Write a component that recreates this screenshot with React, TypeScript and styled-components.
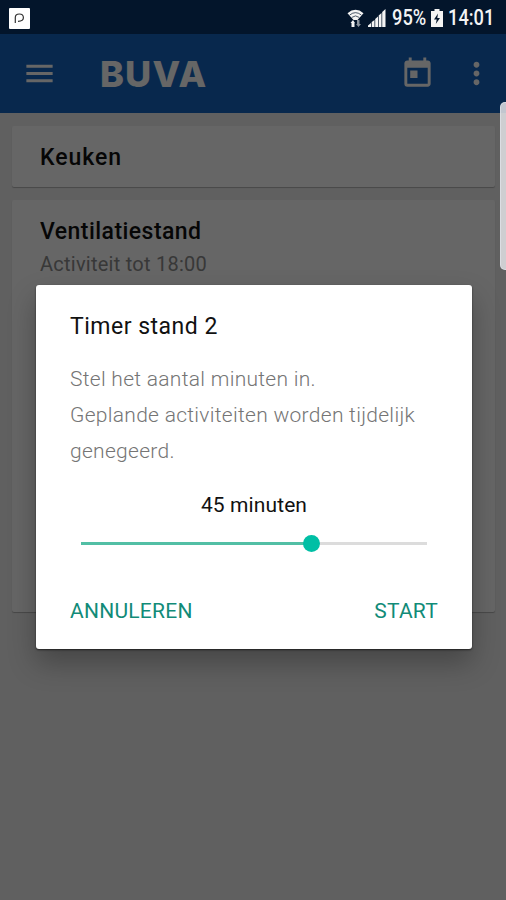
import React, { useState } from 'react'

import styled, { createGlobalStyle } from 'styled-components'
import { MdMenu, MdMoreVert, MdToday } from 'react-icons/md'

const GlobalStyle = createGlobalStyle`
  * {
    box-sizing: border-box;
  }

  body {
    margin: 0;
    overflow: hidden;
    font-family: Roboto, 'Liberation Sans', sans-serif;
  }
`

const Screen = styled.div`
  position: relative;
  display: flex;
  flex-direction: column;
  width: 506px;
  height: 900px;
  background: #f0f0f0;
  overflow: hidden;
`

const StatusBar = styled.div`
  position: relative;
  z-index: 2;
  display: flex;
  align-items: center;
  justify-content: space-between;
  flex: none;
  height: 34px;
  padding: 2px 11px 0 9px;
  background: #03152b;
  color: #f4f4f4;
`

const StatusIcons = styled.div`
  display: flex;
  align-items: center;

  svg {
    display: block;
  }
`

const StatusText = styled.span<{ $width: number }>`
  width: ${({ $width }) => $width}px;
  font-size: 22px;
  font-weight: 500;
  line-height: 32px;
  white-space: nowrap;
  transform: scaleX(0.83);
  transform-origin: left center;
`

const Toolbar = styled.header`
  display: flex;
  align-items: center;
  flex: none;
  height: 79px;
  padding: 0 12px 0 22px;
  background: #1565c0;
  color: #fff;
`

const Logo = styled.div`
  flex: 1;
  margin-left: 43px;
  font-family: Inter, 'Liberation Sans', sans-serif;
  font-size: 36px;
  font-weight: 800;
  line-height: 40px;
  letter-spacing: 1.2px;
`

const MoreButton = styled.div`
  display: flex;
  margin-left: 24px;
`

const Content = styled.main`
  display: flex;
  flex-direction: column;
  gap: 13px;
  padding: 13px 11px 0 12px;
`

const Card = styled.section<{ $height: number }>`
  height: ${({ $height }) => $height}px;
  padding: 18px 28px;
  border-radius: 2px;
  background: #fff;
  box-shadow: 0 1px 1px rgba(0, 0, 0, 0.25);
`

const CardTitle = styled.h2<{ $spacing: number }>`
  margin: 0;
  color: #111;
  font-size: 23px;
  font-weight: 500;
  line-height: 28px;
  letter-spacing: ${({ $spacing }) => $spacing}px;
`

const CardText = styled.p`
  margin: 4px 0 0;
  color: #8c8c8c;
  font-size: 20px;
  line-height: 28px;
  letter-spacing: 0.25px;
`

const Backdrop = styled.div`
  position: absolute;
  inset: 0;
  z-index: 1;
  display: flex;
  align-items: center;
  justify-content: center;
  padding: 34px 0 0 2px;
  background: rgba(0, 0, 0, 0.6);
`

const Dialog = styled.div`
  display: flex;
  flex-direction: column;
  width: 436px;
  height: 364px;
  padding: 28px 34px 24px;
  border-radius: 3px;
  background: #fff;
  box-shadow: 0 1px 2px rgba(0, 0, 0, 0.6), 0 14px 28px rgba(0, 0, 0, 0.28);
`

const DialogTitle = styled.h1`
  margin: 0;
  color: #111;
  font-size: 23px;
  font-weight: 400;
  line-height: 28px;
  letter-spacing: 0.5px;
`

const DialogText = styled.p`
  margin: 20px 0 0;
  color: #757575;
  font-size: 21px;
  font-weight: 300;
  line-height: 36px;
  letter-spacing: 0.29px;
  white-space: nowrap;
`

const Minutes = styled.div`
  margin-top: 22px;
  color: #111;
  font-size: 21px;
  line-height: 28px;
  letter-spacing: 0.1px;
  text-align: center;
`

const Slider = styled.div`
  display: flex;
  align-items: center;
  height: 18px;
  margin: 15px 11px 0;
`

const Track = styled.div<{ $active?: boolean }>`
  flex: ${({ $active }) => ($active ? 'none' : 1)};
  height: 3px;
  background: ${({ $active }) => ($active ? '#52bfa5' : '#dcdcdc')};
`

const Thumb = styled.div`
  position: relative;
  z-index: 1;
  flex: none;
  width: 17px;
  height: 17px;
  margin: 0 -8px 0 -9px;
  border-radius: 50%;
  background: #00bfa5;
`

const Actions = styled.div`
  display: flex;
  justify-content: space-between;
  margin-top: auto;
`

const Action = styled.button`
  padding: 0;
  border: 0;
  background: none;
  color: #128b78;
  font-family: inherit;
  font-size: 21px;
  line-height: 28px;
  letter-spacing: 0.25px;
`

const ParkingIcon = () => (
  <svg width="21" height="21" viewBox="0 0 21 21">
    <rect width="21" height="21" rx="1" fill="#fff" />
    <path
      d="M6.3 15V9.5Q6.3 6 10.3 6Q14.4 6 14.4 9.7Q14.4 13 9 13.4"
      fill="none"
      stroke="#333"
      strokeWidth="1.2"
    />
  </svg>
)

const WifiIcon = () => (
  <svg width="17" height="19" viewBox="0 0 17 19">
    <path d="M.5 4.3Q8.5 -2.6 16.5 4.3L10.5 11H6.5Z" fill="#f4f4f4" />
    <path
      d="M2.7 6Q8.5 1.3 14.3 6M4.8 8.4Q8.5 5.4 12.2 8.4"
      fill="none"
      stroke="#03152b"
      strokeWidth="0.7"
    />
    <path d="M4.5 18V14H3.5L6 11L8 14H7.5V18Z" fill="#f4f4f4" />
    <path d="M10 11V15H9L11.5 18L14 15H12.5V11Z" fill="#8c949d" />
  </svg>
)

const SignalIcon = () => (
  <svg width="18" height="18" viewBox="0 0 18 18" fill="#f4f4f4">
    <path d="M0 18V16.5L3 14V18Z" />
    <path d="M3.7 18V13L6.5 11V18Z" />
    <path d="M7.2 18V10L10 7.5V18Z" />
    <path d="M10.7 18V6.5L13.5 4V18Z" />
    <path d="M14.2 18V3L17.5 0V18Z" />
  </svg>
)

const BatteryIcon = () => (
  <svg width="12" height="18" viewBox="0 0 12 18">
    <path d="M3.5 0H8.5V2H12V18H0V2H3.5Z" fill="#f4f4f4" />
    <path d="M7 4.5L3 10.5H5.7L4.8 15L9 9H6.3Z" fill="#03152b" />
  </svg>
)

const EdgeHandle = styled.div`
  position: absolute;
  z-index: 3;
  top: 102px;
  right: -4px;
  width: 10px;
  height: 168px;
  border: 1px solid rgba(225, 228, 235, 0.7);
  border-radius: 5px;
  background: rgba(225, 225, 228, 0.86);
`

const IconGap = styled.span<{ $width: number }>`
  width: ${({ $width }) => $width}px;
`

const MAX_MINUTES = 67.5

const App: React.FC = () => {
  const [minutes] = useState(45)

  return (
    <>
      <GlobalStyle />
      <Screen>
        <StatusBar>
          <ParkingIcon />
          <StatusIcons>
            <WifiIcon />
            <IconGap $width={4} />
            <SignalIcon />
            <IconGap $width={6} />
            <StatusText $width={39}>95%</StatusText>
            <BatteryIcon />
            <IconGap $width={5} />
            <StatusText $width={47}>14:01</StatusText>
          </StatusIcons>
        </StatusBar>

        <Toolbar>
          <MdMenu size={35} />
          <Logo>BUVA</Logo>
          <MdToday size={35} />
          <MoreButton>
            <MdMoreVert size={35} />
          </MoreButton>
        </Toolbar>

        <Content>
          <Card $height={61}>
            <CardTitle $spacing={0.95}>Keuken</CardTitle>
          </Card>
          <Card $height={412}>
            <CardTitle $spacing={0.45}>Ventilatiestand</CardTitle>
            <CardText>Activiteit tot 18:00</CardText>
          </Card>
        </Content>

        <Backdrop>
          <Dialog role="dialog">
            <DialogTitle>Timer stand 2</DialogTitle>
            <DialogText>
              Stel het aantal minuten in.
              <br />
              Geplande activiteiten worden tijdelijk
              <br />
              genegeerd.
            </DialogText>
            <Minutes>{minutes} minuten</Minutes>
            <Slider>
              <Track $active style={{ width: `${(minutes / MAX_MINUTES) * 100}%` }} />
              <Thumb />
              <Track />
            </Slider>
            <Actions>
              <Action>ANNULEREN</Action>
              <Action>START</Action>
            </Actions>
          </Dialog>
        </Backdrop>

        <EdgeHandle />
      </Screen>
    </>
  )
}

export default App
